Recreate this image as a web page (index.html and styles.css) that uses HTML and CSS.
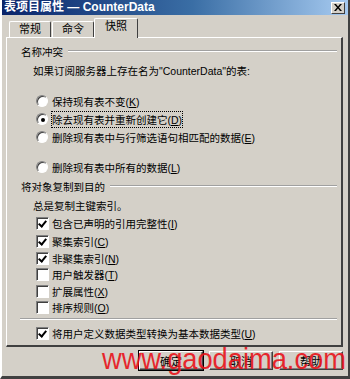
FILE: index.html
```html
<!DOCTYPE html>
<html lang="zh">
<head>
<meta charset="utf-8">
<link rel="stylesheet" href="styles.css">
</head>
<body>
<div class="window">
  <div class="titlebar">
    <span class="title">表项目属性 — CounterData</span>
    <span class="close"><svg width="8" height="7" viewBox="0 0 8 7"><path d="M0 0h2l2 2.5L6 0h2L5 3.5 8 7H6L4 4.5 2 7H0l3-3.5z" fill="#000"/></svg></span>
  </div>
  <div class="tabs">
    <div class="tab">常规</div>
    <div class="tab">命令</div>
    <div class="tab active">快照</div>
  </div>
  <div class="panel">
    <div class="row header"><span>名称冲突</span><span class="etch"></span></div>
    <div class="row indent mt1">如果订阅服务器上存在名为"CounterData"的表:</div>
    <div class="row opt mt13"><span class="radio"></span><span>保持现有表不变(<u>K</u>)</span></div>
    <div class="row opt"><span class="radio on"></span><span class="focus">除去现有表并重新创建它(<u>D</u>)</span></div>
    <div class="row opt"><span class="radio"></span><span>删除现有表中与行筛选语句相匹配的数据(<u>E</u>)</span></div>
    <div class="row opt mt12"><span class="radio"></span><span>删除现有表中所有的数据(<u>L</u>)</span></div>
    <div class="row header mt1"><span>将对象复制到目的</span><span class="etch"></span></div>
    <div class="row indent mt1">总是复制主键索引。</div>
    <div class="row opt"><span class="check on"></span><span>包含已声明的引用完整性(<u>I</u>)</span></div>
    <div class="row opt"><span class="check on"></span><span>聚集索引(<u>C</u>)</span></div>
    <div class="row opt s16"><span class="check on"></span><span>非聚集索引(<u>N</u>)</span></div>
    <div class="row opt s16"><span class="check"></span><span>用户触发器(<u>T</u>)</span></div>
    <div class="row opt s16 mt1"><span class="check"></span><span>扩展属性(<u>X</u>)</span></div>
    <div class="row opt s16"><span class="check"></span><span>排序规则(<u>O</u>)</span></div>
    <div class="sep"></div>
    <div class="row opt s16 mt5"><span class="check on"></span><span>将用户定义数据类型转换为基本数据类型(<u>U</u>)</span></div>
  </div>
  <div class="buttons">
    <div class="btn default"><span>确定</span></div>
    <div class="btn"><span>取消</span></div>
    <div class="btn"><span>帮助</span></div>
    <div class="watermark">www.gaodaima.com</div>
  </div>
</div>
</body>
</html>
```

FILE: styles.css
```css
html, body {
  margin: 0;
  padding: 0;
  background: #d4d0c8;
}
body {
  width: 350px;
  height: 379px;
  overflow: hidden;
  font-family: "Liberation Sans", "Noto Sans CJK SC", sans-serif;
  font-size: 10.5px;
  color: #000;
}
.window {
  width: 350px;
  height: 379px;
  box-sizing: border-box;
  border-left: 2px solid #fff;
  border-right: 2px solid #404040;
  border-bottom: 3px solid #404040;
  display: flex;
  flex-direction: column;
  position: relative;
}
.titlebar {
  height: 15px;
  background: linear-gradient(to right, #0a246a 0%, #3a6ea5 55%, #a6caf0 100%);
  display: flex;
  align-items: center;
  justify-content: space-between;
  padding: 0 3px 0 2px;
}
.title {
  color: #fff;
  font-family: "Liberation Sans", "Noto Sans CJK SC", sans-serif;
  font-weight: bold;
  font-size: 12px;
  line-height: 15px;
}
.close {
  width: 12px;
  height: 10px;
  background: #d4d0c8;
  border: 1px solid;
  border-color: #fff #404040 #404040 #fff;
  display: flex;
  align-items: center;
  justify-content: center;
}
.tabs {
  display: flex;
  align-items: flex-end;
  height: 22px;
  padding-left: 7px;
  font-size: 11px;
}
.tab {
  width: 40px;
  height: 15px;
  line-height: 15px;
  text-align: center;
  border-top: 1px solid #fff;
  border-left: 1px solid #fff;
  border-right: 1px solid #404040;
  border-radius: 2px 2px 0 0;
  margin-right: 1px;
}
.tab.active {
  width: 42px;
  height: 19px;
  line-height: 15px;
  margin-left: -1px;
  margin-bottom: -1px;
  background: #d4d0c8;
  position: relative;
  z-index: 1;
}
.panel {
  margin: 0 5px 0 4px;
  height: 310px;
  box-sizing: border-box;
  border-top: 1px solid #fff;
  border-left: 1px solid #fff;
  border-right: 2px solid #404040;
  border-bottom: 2px solid #404040;
  padding: 4px 4px 0 14px;
  display: flex;
  flex-direction: column;
}
.row {
  height: 18px;
  display: flex;
  align-items: center;
  white-space: nowrap;
  flex-shrink: 0;
}
.row.s16 { height: 16px; }
.mt1 { margin-top: 1px; }
.mt5 { margin-top: 5px; }
.mt12 { margin-top: 12px; }
.mt13 { margin-top: 13px; }
.header .etch {
  flex: 1;
  height: 0;
  border-top: 1px solid #a0a0a0;
  border-bottom: 1px solid #fff;
  margin-left: 5px;
}
.indent { padding-left: 12px; }
.opt { padding-left: 15px; }
.radio {
  width: 10px;
  height: 10px;
  border-radius: 50%;
  background: #fff;
  border: 1px solid;
  border-color: #808080 #fff #fff #808080;
  box-shadow: inset 1px 1px 0 #404040;
  margin-right: 4px;
  position: relative;
  flex-shrink: 0;
}
.radio.on::after {
  content: "";
  position: absolute;
  left: 4px;
  top: 4px;
  width: 4px;
  height: 4px;
  border-radius: 50%;
  background: #000;
}
.check {
  width: 11px;
  height: 11px;
  background: #fff;
  border: 1px solid;
  border-color: #808080 #fff #fff #808080;
  box-shadow: inset 1px 1px 0 #404040;
  margin-right: 3px;
  position: relative;
  flex-shrink: 0;
}
.check.on::after {
  content: "";
  position: absolute;
  left: 3px;
  top: 1px;
  width: 3px;
  height: 6px;
  border-right: 2px solid #000;
  border-bottom: 2px solid #000;
  transform: rotate(40deg);
}
.focus {
  outline: 1px dotted #000;
  outline-offset: 0;
}
.sep {
  height: 0;
  border-top: 1px solid #a0a0a0;
  border-bottom: 1px solid #fff;
  margin-top: 3px;
  margin-left: -1px;
}
.buttons {
  display: flex;
  justify-content: flex-end;
  gap: 6px;
  padding: 4px 5px 0 0;
  position: relative;
  font-size: 11px;
}
.btn {
  width: 62px;
  height: 17px;
  border: 1px solid;
  border-color: #fff #404040 #404040 #fff;
  box-shadow: inset -1px -1px 0 #808080;
  display: flex;
  align-items: center;
  justify-content: center;
}
.btn.default {
  outline: 1px solid #000;
  outline-offset: 0;
}
.watermark {
  position: absolute;
  left: 100px;
  top: -3px;
  font-family: "Liberation Sans", sans-serif;
  font-size: 29px;
  line-height: 30px;
  color: #e8141c;
  opacity: 0.9;
  white-space: nowrap;
  transform: scaleX(0.94);
  transform-origin: left center;
}
```
